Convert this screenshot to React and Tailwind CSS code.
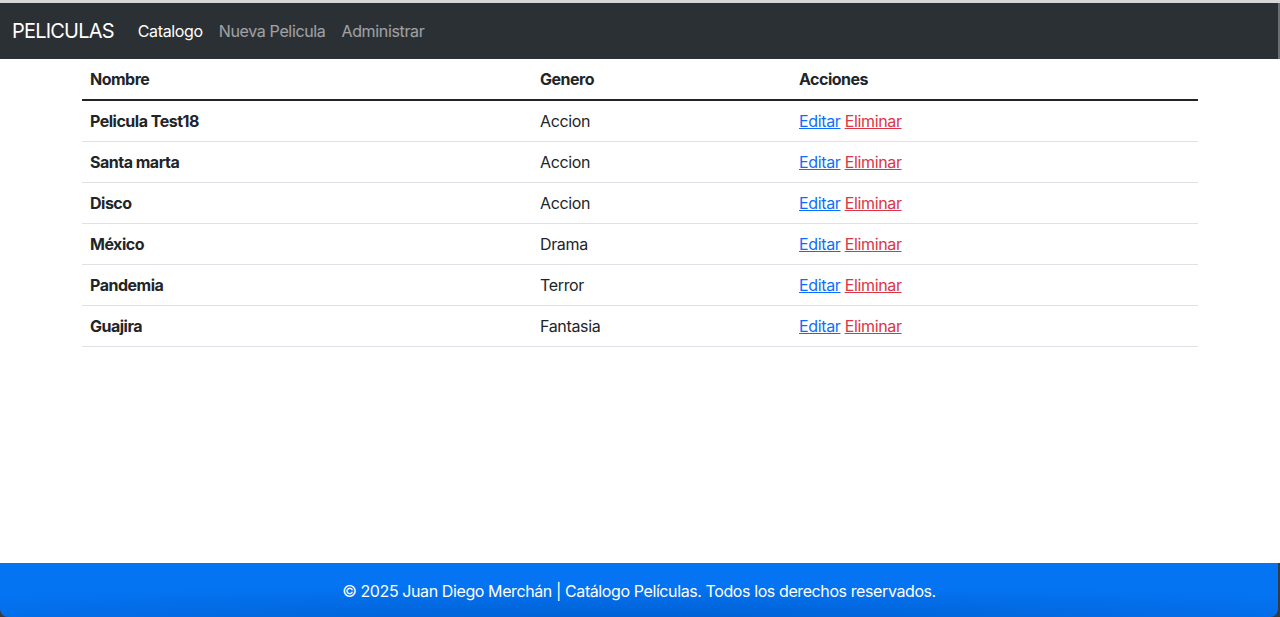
const PELICULAS = [
  { nombre: "Pelicula Test18", genero: "Accion" },
  { nombre: "Santa marta", genero: "Accion" },
  { nombre: "Disco", genero: "Accion" },
  { nombre: "México", genero: "Drama" },
  { nombre: "Pandemia", genero: "Terror" },
  { nombre: "Guajira", genero: "Fantasia" },
];

const App = () => {
  return (
    <div className="min-h-screen flex flex-col bg-white text-[#212529] font-['Inter',sans-serif] text-base tracking-[-0.35px]">
      {/* franja superior */}
      <div className="h-[3px] bg-[#d6d6d6]" />

      {/* Navbar */}
      <nav className="h-14 bg-[#2b3035] flex items-center pl-3 pr-[2px] border-r-2 border-[#6b6e72]">
        <span className="text-white text-[20px] mr-4 tracking-[-0.8px]">PELICULAS</span>
        <a className="px-2 text-white">Catalogo</a>
        <a className="px-2 text-white/55">Nueva Pelicula</a>
        <a className="px-2 text-white/55">Administrar</a>
      </nav>

      {/* Catalogo */}
      <main className="flex-1">
        <div className="w-[1116px] mx-auto">
          <table className="w-full border-collapse text-left">
            <thead>
              <tr className="border-b-2 border-[#212529]">
                <th className="w-[450px] px-2 py-2 leading-6 font-bold tracking-[-0.5px]">Nombre</th>
                <th className="w-[259px] px-2 py-2 leading-6 font-bold tracking-[-0.5px]">Genero</th>
                <th className="px-2 py-2 leading-6 font-bold tracking-[-0.5px]">Acciones</th>
              </tr>
            </thead>
            <tbody>
              {PELICULAS.map((p) => (
                <tr key={p.nombre} className="border-b border-[#dee2e6]">
                  <td className="px-2 py-2 leading-6 font-bold tracking-[-0.5px]">{p.nombre}</td>
                  <td className="px-2 py-2 leading-6">{p.genero}</td>
                  <td className="px-2 py-2 leading-6">
                    <a className="text-[#0d6efd] underline">Editar</a>{" "}
                    <a className="text-[#dc3545] underline">Eliminar</a>
                  </td>
                </tr>
              ))}
            </tbody>
          </table>
        </div>
      </main>

      {/* Footer */}
      <div className="bg-[#3a3a3a]">
        <footer className="h-[54px] mr-[2px] pt-[2px] rounded-b-lg flex items-center justify-center text-white tracking-[-0.4px] bg-[radial-gradient(ellipse_70%_60%_at_50%_100%,#0061d4_0%,#0574f3_100%)]">
          © 2025 Juan Diego Merchán | Catálogo Películas. Todos los derechos reservados.
        </footer>
      </div>
    </div>
  );
};

export default App;
